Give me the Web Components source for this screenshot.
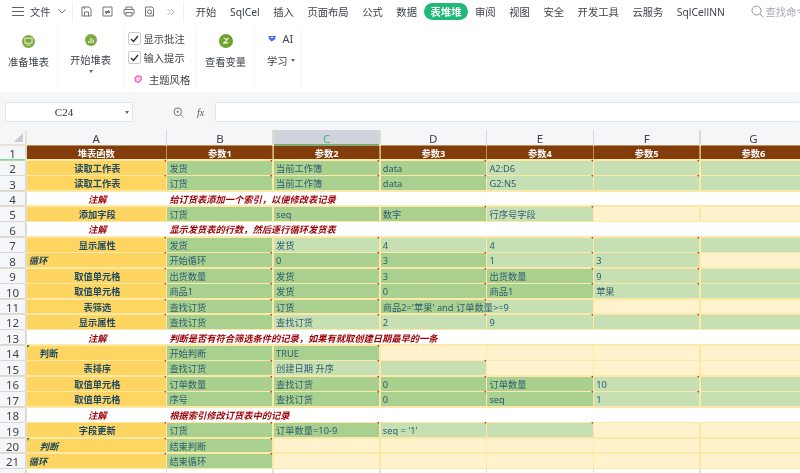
<!DOCTYPE html>
<html lang="zh">
<head>
<meta charset="utf-8">
<title>表堆堆</title>
<style>
  html, body { margin: 0; height: 100%; background: #fff; }
  body { width: 800px; height: 473px; overflow: hidden; font-family: "Noto Sans", "Noto Sans CJK SC", sans-serif; }
</style>
</head>
<body>
<app-shell>
  <title-bar></title-bar>
  <ribbon-bar>
    <ribbon-group width="58" top="7" gap="5.5">
      <svg slot="icon" width="13" height="13" viewBox="0 0 13 13"><circle cx="6.5" cy="6.5" r="6.5" fill="#7cab3c"/><rect x="3" y="3.2" width="7" height="5" fill="none" stroke="#dfeccb" stroke-width="1.1"/><path d="M4.5 10h4" stroke="#dfeccb"/></svg>
      准备堆表
    </ribbon-group>
    <ribbon-group width="66" top="6" gap="4.5" caret>
      <svg slot="icon" width="12" height="12" viewBox="0 0 12 12"><circle cx="6" cy="6" r="6" fill="#7cab3c"/><path d="M3 9V7h1.4v2zM5.3 9V4h1.4v5zM7.6 9V5.6H9V9z" fill="#dfeccb"/></svg>
      开始堆表
    </ribbon-group>
    <ribbon-checks></ribbon-checks>
    <ribbon-group width="58" top="7" gap="5.5">
      <svg slot="icon" width="14" height="14" viewBox="0 0 14 14"><circle cx="7" cy="7" r="7" fill="#6fa32e"/><path d="M4.500 4.300c1.500 0 2 1 3 1s1.500-.6 2-1.300M9.200 4 4.800 10M4.300 9c.8-.8 1.600-.8 2.500-.3s1.600.4 2.500-.3" fill="none" stroke="#fff" stroke-width="1.100"/></svg>
      查看变量
    </ribbon-group>
    <ribbon-ai></ribbon-ai>
  </ribbon-bar>
  <formula-bar></formula-bar>
  <sheet-grid></sheet-grid>
</app-shell>

<script>
class AppShell extends HTMLElement {
  constructor() {
    super();
    this.attachShadow({ mode: 'open' }).innerHTML = `
      <style>
        :host { display: flex; flex-direction: column; width: 800px; height: 473px; overflow: hidden; background: #f5f6f8; filter: blur(.4px); }
      </style>
      <slot></slot>`;
  }
}

class TabItem extends HTMLElement {
  constructor() {
    super();
    this.attachShadow({ mode: 'open' }).innerHTML = `
      <style>
        :host { display: flex; align-items: center; height: 17px; padding: 0 6.8px; font-size: 10.3px; color: #3f4349; white-space: nowrap; border-radius: 9px; }
        :host([active]) { background: #1fb978; color: #fff; font-weight: 700; }
      </style>
      <slot></slot>`;
  }
}

class TitleBar extends HTMLElement {
  constructor() {
    super();
    const st = 'fill="none" stroke="#70757d" stroke-width="1"';
    this.attachShadow({ mode: 'open' }).innerHTML = `
      <style>
        :host { display: flex; align-items: center; height: 23px; background: #fff; flex: none; overflow: hidden; }
        .menu { display: flex; align-items: center; padding-left: 12px; width: 60px; gap: 6px; font-size: 10.3px; color: #3f4349; flex: none; }
        .sep { width: 1px; height: 20px; background: #eeeff1; flex: none; }
        .quick { display: flex; align-items: center; gap: 9.8px; padding-left: 8px; width: 110px; box-sizing: border-box; flex: none; }
        .tabs { display: flex; align-items: center; padding-left: 5px; flex: none; }
        .search { display: flex; align-items: center; gap: 2px; margin-left: 19px; font-size: 10.3px; color: #a4a8af; white-space: nowrap; }
      </style>
      <div class="menu">
        <svg width="12" height="9" viewBox="0 0 12 9"><path d="M0 .5h12M0 4.5h12M0 8.5h12" stroke="#5c6068"/></svg>
        <span>文件</span>
        <svg width="8" height="5" viewBox="0 0 8 5" style="margin-left:1px"><path d="M.5.5 4 4 7.500.5" ${st} stroke-width=".8"/></svg>
      </div>
      <div class="sep"></div>
      <div class="quick">
        <svg width="11" height="11" viewBox="0 0 11 11"><path d="M1 1h7l2 2v7H1zM3.500 10V6h4v4M3.500 1v2" ${st}/></svg>
        <svg width="11" height="11" viewBox="0 0 11 11"><path d="M1 1h9v9H1zM3 5.500h4.500L6 4M8 6.500H3.500L5 8" ${st}/></svg>
        <svg width="12" height="11" viewBox="0 0 12 11"><path d="M3 3.500V1h6v2.500M3 8H1V3.500h10V8H9M3 6.500h6V10H3z" ${st}/></svg>
        <svg width="11" height="11" viewBox="0 0 11 11"><path d="M1.500 1H8l1.500 1.500V10h-8z" ${st}/><circle cx="5.500" cy="5.800" r="2" ${st}/><path d="m7 7.300 1.500 1.500" ${st}/></svg>
        <svg width="8" height="8" viewBox="0 0 8 8" style="margin-left:2px"><path d="m.5 1 3 3-3 3M4 1l3 3-3 3" fill="none" stroke="#a9adb3" stroke-width=".9"/></svg>
      </div>
      <div class="sep"></div>
      <div class="tabs">
        <tab-item>开始</tab-item><tab-item>SqlCel</tab-item><tab-item>插入</tab-item><tab-item>页面布局</tab-item>
        <tab-item>公式</tab-item><tab-item>数据</tab-item><tab-item active>表堆堆</tab-item><tab-item>审阅</tab-item>
        <tab-item>视图</tab-item><tab-item>安全</tab-item><tab-item>开发工具</tab-item><tab-item>云服务</tab-item>
        <tab-item>SqlCellNN</tab-item>
      </div>
      <div class="search">
        <svg width="13" height="13" viewBox="0 0 13 13"><circle cx="5.500" cy="5.500" r="4.500" fill="none" stroke="#8d929a"/><path d="m9 9 3.500 3.500" stroke="#8d929a"/></svg>
        <span>查找命令</span>
      </div>`;
  }
}

class RibbonBar extends HTMLElement {
  constructor() {
    super();
    this.attachShadow({ mode: 'open' }).innerHTML = `
      <style>
        :host { display: flex; height: 69px; padding: 4px 0 3px; box-sizing: border-box; background: #fff; flex: none; }
      </style>
      <slot></slot>`;
  }
}

class RibbonGroup extends HTMLElement {
  constructor() {
    super();
    this.attachShadow({ mode: 'open' }).innerHTML = `
      <style>
        :host { display: flex; flex-direction: column; align-items: center; box-sizing: border-box; border-right: 1px solid #f3f4f5; font-size: 10.300px; color: #3f4349; white-space: nowrap; flex: none; }
        .icon { display: flex; height: 14px; align-items: center; }
        .caret { width: 0; height: 0; border: 2px solid transparent; border-top: 3px solid #666; border-bottom: 0; margin-top: 3px; }
      </style>
      <div class="icon"><slot name="icon"></slot></div>
      <slot></slot>
      <div class="caret"></div>`;
  }
  connectedCallback() {
    this.style.width = this.getAttribute('width') + 'px';
    this.style.paddingTop = this.getAttribute('top') + 'px';
    this.shadowRoot.querySelector('.icon').style.marginBottom = this.getAttribute('gap') + 'px';
    if (!this.hasAttribute('caret')) this.shadowRoot.querySelector('.caret').remove();
  }
}

class CheckItem extends HTMLElement {
  constructor() {
    super();
    this.attachShadow({ mode: 'open' }).innerHTML = `
      <style>
        :host { display: flex; align-items: center; gap: 2.500px; height: 21px; font-size: 10.300px; color: #3f4349; white-space: nowrap; }
        .box { width: 11px; height: 11px; border: 1px solid #c8cad0; border-radius: 2px; display: flex; align-items: center; justify-content: center; background: #fff; }
      </style>
      <span class="box"><svg width="9" height="8" viewBox="0 0 9 8"><path d="M1 4l2.500 2.500L8 1" fill="none" stroke="#222" stroke-width="1.200"/></svg></span>
      <slot></slot>`;
  }
}

class RibbonChecks extends HTMLElement {
  constructor() {
    super();
    this.attachShadow({ mode: 'open' }).innerHTML = `
      <style>
        :host { display: flex; flex-direction: column; width: 73px; padding: 2px 0 0 4px; box-sizing: border-box; border-right: 1px solid #f3f4f5; flex: none; }
        .theme { display: flex; align-items: center; gap: 7.500px; height: 21px; padding-left: 5.500px; margin-top: 2px; font-size: 10.300px; color: #3f4349; white-space: nowrap; }
      </style>
      <check-item>显示批注</check-item>
      <check-item>输入提示</check-item>
      <div class="theme">
        <svg width="8" height="8" viewBox="0 0 8 8"><path d="M1 3 3.500 .8 7 1.500 7.500 4.500 4.500 7.500 1.500 6z" fill="#fbd0ea" stroke="#ef5fb4" stroke-width="1.200"/></svg>
        <span>主题风格</span>
      </div>`;
  }
}

class RibbonAi extends HTMLElement {
  constructor() {
    super();
    this.attachShadow({ mode: 'open' }).innerHTML = `
      <style>
        :host { display: flex; flex-direction: column; width: 47px; padding: 2px 0 0 12px; box-sizing: border-box; border-right: 1px solid #f3f4f5; font-size: 10.300px; color: #3f4349; flex: none; }
        div { display: flex; align-items: center; height: 21px; white-space: nowrap; }
        .ai { gap: 7px; font-size: 10.800px; padding-left: .500px; margin-top: -1px; margin-bottom: 1px; }
        .learn { gap: 3px; }
        i { width: 0; height: 0; border: 2px solid transparent; border-top: 3px solid #666; border-bottom: 0; }
      </style>
      <div class="ai">
        <svg width="8" height="7" viewBox="0 0 8 7"><path d="M.3 1h5.400L7.700 .6 7 4.500 3.500 6.500 1 4z" fill="#4a6cf0"/><path d="M2.500 2.600h2.800" stroke="#fff" stroke-width=".9"/></svg>
        <span>AI</span>
      </div>
      <div class="learn"><span>学习</span><i></i></div>`;
  }
}

class FormulaBar extends HTMLElement {
  constructor() {
    super();
    this.attachShadow({ mode: 'open' }).innerHTML = `
      <style>
        :host { display: flex; align-items: center; height: 38px; padding: 10px 0 8px 5px; box-sizing: border-box; background: #f5f6f8; flex: none; }
        .box { height: 20px; box-sizing: border-box; background: #fff; border: 1px solid #e3e5e9; border-radius: 2px; }
        .name { width: 128px; display: flex; align-items: center; justify-content: center; padding-right: 10px; position: relative; font: 11px "Liberation Serif", serif; color: #333; }
        .name i { position: absolute; right: 3px; top: 8px; border: 2px solid transparent; border-top: 3px solid #666; border-bottom: 0; }
        .zoom { margin-left: 40px; }
        .fx { margin-left: 13px; width: 13px; font: italic 10px "Liberation Serif", serif; color: #555; }
        .input { margin-left: 5px; flex: 1; border-right: 0; }
      </style>
      <div class="box name">C24<i></i></div>
      <svg class="zoom" width="11" height="11" viewBox="0 0 11 11"><circle cx="4.800" cy="4.800" r="3.800" fill="none" stroke="#777"/><path d="m7.500 7.500 3 3M3.300 4.800h3M4.800 3.300v3" stroke="#777" stroke-width=".8"/></svg>
      <span class="fx">fx</span>
      <div class="box input"></div>`;
  }
}

class SheetCell extends HTMLElement {
  constructor() {
    super();
    this.attachShadow({ mode: 'open' }).innerHTML = `
      <style>
        :host { display: flex; align-items: center; box-sizing: border-box; position: relative; min-width: 0; padding: 1.500px 0 0 2px; font-size: 9.250px; color: #2f5d70; white-space: nowrap; line-height: 1; }
        :host([tone=d]) { background: #a9d08e; }
        :host([tone=l]) { background: #c6e0b4; }
        :host([tone=c]) { background: #fff2cc; }
        :host([tone=a]) { background: #ffd561; color: #1e4a66; font-weight: 700; justify-content: center; }
        :host([tone=a][left]) { justify-content: flex-start; }
        :host([tone=a][em]) { font-style: italic; color: #1c4a58; }
        :host([tone=h]) { background: #833c0b; color: #fff; font-weight: 700; justify-content: center; padding-left: 0; box-shadow: 1.600px 0 0 #b8935a, 0 -1px 0 #b8935a; }
        :host([tone=n]) { background: #fff; color: #9c0006; font-weight: 700; font-style: italic; box-shadow: 1.600px 0 0 #fff; }
        :host([tone=n][mid]) { justify-content: center; }
        :host([tone=w]) { background: #fff; box-shadow: 1.600px 0 0 #dcdfe4; }
        :host([over]) { z-index: 1; }
        :host([mark])::after { content: ""; position: absolute; right: 0; top: -1px; border-top: 2.500px solid #f01c1c; border-left: 2.500px solid transparent; }
        :host([flag])::before { content: ""; position: absolute; left: 0; top: -1px; border-top: 3px solid #3d8f3a; border-right: 3px solid transparent; }
      </style>
      <slot></slot>`;
  }
}

// uppercase tone = red comment mark in the cell corner
const ROWS = [
  ['读取工作表', 'A', [['发货', 'D'], ['当前工作簿', 'D'], ['data', 'D'], ['A2:D6', 'L'], ['', 'L'], ['', 'L']]],
  ['读取工作表', 'A', [['订货', 'D'], ['当前工作簿', 'D'], ['data', 'D'], ['G2:N5', 'L'], ['', 'L'], ['', 'L']]],
  ['note', '给订货表添加一个索引，以便修改表记录'],
  ['添加字段', 'a', [['订货', 'd'], ['seq', 'd'], ['数字', 'D'], ['行序号字段', 'L'], ['', 'c'], ['', 'c']]],
  ['note', '显示发货表的行数，然后逐行循环发货表'],
  ['显示属性', 'A', [['发货', 'd'], ['发货', 'L'], ['4', 'l'], ['4', 'L'], ['', 'L'], ['', 'l']]],
  ['循环', 'AL', [['开始循环', 'D'], ['0', 'D'], ['3', 'D'], ['1', 'L'], ['3', 'L'], ['', 'c']]],
  ['取值单元格', 'A', [['出货数量', 'D'], ['发货', 'D'], ['3', 'D'], ['出货数量', 'D'], ['9', 'L'], ['', 'l']]],
  ['取值单元格', 'A', [['商品1', 'D'], ['发货', 'D'], ['0', 'D'], ['商品1', 'D'], ['苹果', 'L'], ['', 'l']]],
  ['表筛选', 'A', [['查找订货', 'D'], ['订货', 'D'], ["商品2='苹果' and 订单数量>=9", 'D', 1], ['', 'l'], ['', 'c'], ['', 'c']]],
  ['显示属性', 'A', [['查找订货', 'D'], ['查找订货', 'L'], ['2', 'L'], ['9', 'L'], ['', 'L'], ['', 'l']]],
  ['note', '判断是否有符合筛选条件的记录，如果有就取创建日期最早的一条'],
  ['判断', 'F', [['开始判断', 'd'], ['TRUE', 'D'], ['', 'c'], ['', 'c'], ['', 'c'], ['', 'c']]],
  ['表排序', 'A', [['查找订货', 'D'], ['创建日期 升序', 'L'], ['', 'L'], ['', 'c'], ['', 'c'], ['', 'c']]],
  ['取值单元格', 'A', [['订单数量', 'D'], ['查找订货', 'D'], ['0', 'D'], ['订单数量', 'D'], ['10', 'L'], ['', 'l']]],
  ['取值单元格', 'A', [['序号', 'D'], ['查找订货', 'D'], ['0', 'D'], ['seq', 'D'], ['1', 'L'], ['', 'l']]],
  ['note', '根据索引修改订货表中的记录'],
  ['字段更新', 'A', [['订货', 'D'], ['订单数量=10-9', 'D'], ["seq = '1'", 'L'], ['', 'L'], ['', 'c'], ['', 'c']]],
  ['判断', 'FE', [['结束判断', 'D'], ['', 'c'], ['', 'c'], ['', 'c'], ['', 'c'], ['', 'c']]],
  ['循环', 'AE', [['结束循环', 'D'], ['', 'c'], ['', 'c'], ['', 'c'], ['', 'c'], ['', 'c']]],
];

class SheetGrid extends HTMLElement {
  constructor() {
    super();
    this.attachShadow({ mode: 'open' });
  }
  connectedCallback() {
    this.render();
  }
  static get styles() {
    return `
      :host { display: block; flex: none; height: 343px; overflow: hidden; }
      .sheet { display: grid; grid-template-columns: 25.200px 139px repeat(6, 105.100px); grid-template-rows: 14.400px 13.100px repeat(21, 13.850px); column-gap: 1.600px; row-gap: 1.600px; width: 830px; background: #fbe9a8; }
      .corner, .col, .num { background: #f5f6f8; color: #3f4349; display: flex; align-items: center; justify-content: center; box-sizing: border-box; padding-top: 2px; }
      .corner { position: relative; box-shadow: 1.600px 0 0 #dfe2e7, 0 1.600px 0 #dfe2e7; }
      .corner::after { content: ""; position: absolute; right: 2px; bottom: 2px; border-bottom: 9px solid #c8cbd1; border-left: 9px solid transparent; }
      .col { font-size: 11.500px; box-shadow: 1.600px 0 0 #d5d8e0, 0 1.600px 0 #f5f6f8; }
      .col.on { background: #d0d3db; color: #3dbb86; box-shadow: 1.600px 0 0 #d5d8e0, 0 1.600px 0 #4cc08a; }
      .num { font-size: 11.500px; box-shadow: 0 1.600px 0 #d5d8e0, 1.600px 0 0 #d5d8e0; }
      .num.on { box-shadow: 0 1.600px 0 #7fd3ad, 1.600px 0 0 #d5d8e0; }
      .span { grid-column: 3 / -1; }
    `;
  }
  cell(text, code, over) {
    const tone = code.toLowerCase();
    const mark = code !== tone;
    const overAttr = over ? ' over' : '';
    return `<sheet-cell tone="${tone}"${mark ? ' mark' : ''}${overAttr}>${text}</sheet-cell>`;
  }
  aCell(text, code) {
    const attrs = {
      A: 'tone="a" mark',
      a: 'tone="a"',
      AL: 'tone="a" left em mark',
      AE: 'tone="a" left em mark',
      F: 'tone="a" left flag style="padding-left:13px"',
      FE: 'tone="a" left em flag mark style="padding-left:13px"',
    }[code];
    return `<sheet-cell ${attrs}>${text}</sheet-cell>`;
  }
  render() {
    let html = `<div class="corner"></div>`;
    'ABCDEFG'.split('').forEach(c => {
      html += `<div class="col${c === 'C' ? ' on' : ''}">${c}</div>`;
    });
    html += `<div class="num on">1</div><sheet-cell tone="h">堆表函数</sheet-cell>`;
    for (let i = 1; i <= 6; i++) html += `<sheet-cell tone="h">参数${i}</sheet-cell>`;
    ROWS.forEach((row, i) => {
      html += `<div class="num">${i + 2}</div>`;
      if (row[0] === 'note') {
        html += `<sheet-cell tone="n" mid>注解</sheet-cell><sheet-cell tone="n" class="span">${row[1]}</sheet-cell>`;
        return;
      }
      html += this.aCell(row[0], row[1]);
      row[2].forEach(c => { html += this.cell(c[0], c[1], c[2]); });
    });
    html += `<div class="num"></div>`;
    for (let i = 0; i < 7; i++) html += `<sheet-cell tone="w"></sheet-cell>`;
    this.shadowRoot.innerHTML = `<style>${SheetGrid.styles}</style><div class="sheet">${html}</div>`;
  }
}

customElements.define('app-shell', AppShell);
customElements.define('tab-item', TabItem);
customElements.define('title-bar', TitleBar);
customElements.define('ribbon-bar', RibbonBar);
customElements.define('ribbon-group', RibbonGroup);
customElements.define('check-item', CheckItem);
customElements.define('ribbon-checks', RibbonChecks);
customElements.define('ribbon-ai', RibbonAi);
customElements.define('formula-bar', FormulaBar);
customElements.define('sheet-cell', SheetCell);
customElements.define('sheet-grid', SheetGrid);
</script>
</body>
</html>
